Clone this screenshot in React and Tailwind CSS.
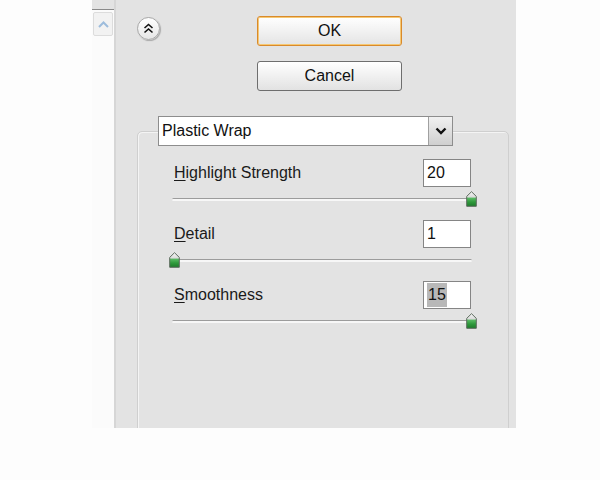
import React from 'react';

const font = { fontFamily: '"Liberation Sans", Arial, sans-serif' };

// Little green slider thumb
const Thumb = () => (
  <svg width="11" height="16" viewBox="0 0 11 16">
    <defs>
      <linearGradient id="tg" x1="0" y1="0" x2="0" y2="1">
        <stop offset="0" stopColor="#f6f6f6" />
        <stop offset="0.38" stopColor="#d9d9d9" />
        <stop offset="0.42" stopColor="#5cbc66" />
        <stop offset="0.7" stopColor="#2f9a3c" />
        <stop offset="1" stopColor="#1d7a2a" />
      </linearGradient>
    </defs>
    <path d="M5.5 0.7 L10.3 5.4 L10.3 15.3 L0.7 15.3 L0.7 5.4 Z" fill="url(#tg)" stroke="#5d6b5e" strokeWidth="1" />
  </svg>
);

const Slider = ({ value, min, max }) => {
  const frac = (value - min) / (max - min);
  return (
    <div className="relative h-[33px] ml-[34px] w-[300px]">
      <div className="absolute top-[11px] left-0 right-0 h-[3px] rounded-full bg-[#f7f7f7] border-t border-[#9c9c9c]" />
      <div className="absolute top-[4px]" style={{ left: `${-3 + frac * 297}px` }}>
        <Thumb />
      </div>
    </div>
  );
};

const Row = ({ label, accessKey, value, min, max, selected }) => (
  <div>
    <div className="flex items-center justify-between h-[28px] ml-[36px] mr-[37px]">
      <span className="text-[16px] text-[#1a1a1a]">
        <span className="underline underline-offset-2">{accessKey}</span>
        {label.slice(1)}
      </span>
      <div className="w-[48px] h-[28px] border border-[#858585] bg-white flex items-center pl-[3px] text-[16px] text-[#111]">
        <span className={selected ? 'bg-[#b8b8b8] px-[1px]' : ''}>{value}</span>
      </div>
    </div>
    <Slider value={value} min={min} max={max} />
  </div>
);

export default function App() {
  return (
    <div className="w-[600px] h-[480px] bg-[#fdfdfd]" style={font}>
      <div className="flex ml-[92px] w-[424px] h-[428px]">
        {/* scroll column */}
        <div className="w-[24px] flex flex-col border-r-2 border-[#d6d6d6]">
          <div className="h-[10px] bg-[#e3e3e3] border-b border-[#8a8a8a]" />
          <div className="flex-1 bg-[#fbfbfb] pt-[2px] pl-[1px]">
            <div className="w-[20px] h-[24px] border border-[#dcdcdc] rounded-[2px] bg-[#f2f2f2] flex items-center justify-center">
              <svg width="11" height="7" viewBox="0 0 11 7">
                <path d="M1 6 L5.5 1.5 L10 6" fill="none" stroke="#9dbcdc" strokeWidth="2" />
              </svg>
            </div>
          </div>
        </div>

        {/* main area */}
        <div className="flex-1 bg-[#e3e3e3] pl-[21px] pr-[7px] pt-[16px] overflow-hidden">
          <div className="flex">
            <div className="mt-[1px] w-[23px] h-[23px] rounded-full border border-[#a8a8a8] bg-gradient-to-b from-white to-[#e6e6e6] shadow-[1px_1px_1px_rgba(0,0,0,0.25)] flex items-center justify-center">
              <svg width="11" height="11" viewBox="0 0 11 11">
                <path d="M1.5 5 L5.5 1.5 L9.5 5 M1.5 9.5 L5.5 6 L9.5 9.5" fill="none" stroke="#111" strokeWidth="1.6" />
              </svg>
            </div>
            <div className="ml-[97px] flex flex-col gap-[15px]">
              <button className="w-[145px] h-[30px] rounded-[3px] border border-[#d98a2b] shadow-[inset_0_0_0_1px_#f6c873] bg-gradient-to-b from-white to-[#e4e4e4] text-[16px] text-[#111]">
                OK
              </button>
              <button className="w-[145px] h-[30px] rounded-[3px] border border-[#6e6e6e] bg-gradient-to-b from-white to-[#e2e2e2] text-[16px] text-[#111]">
                Cancel
              </button>
            </div>
          </div>

          {/* group box */}
          <div className="mt-[40px] w-[372px] h-[320px] border border-[#cfcfcf] rounded-[5px] shadow-[inset_1px_1px_0_#f4f4f4]">
            <div className="-mt-[16px] ml-[20px] flex w-[295px] h-[30px] border border-[#8d8d8d] bg-white">
              <div className="flex-1 flex items-center pl-[3px] text-[16px] text-[#111]">Plastic Wrap</div>
              <div className="w-[24px] h-full border-l border-[#a0a0a0] bg-gradient-to-b from-[#f1f1f1] to-[#cfcfcf] flex items-center justify-center">
                <svg width="12" height="8" viewBox="0 0 12 8">
                  <path d="M1.5 1.5 L6 6 L10.5 1.5" fill="none" stroke="#111" strokeWidth="2.4" />
                </svg>
              </div>
            </div>
            <div className="mt-[13px]">
              <Row label="Highlight Strength" accessKey="H" value={20} min={0} max={20} />
              <Row label="Detail" accessKey="D" value={1} min={1} max={15} />
              <Row label="Smoothness" accessKey="S" value={15} min={1} max={15} selected />
            </div>
          </div>
        </div>
      </div>
    </div>
  );
}
